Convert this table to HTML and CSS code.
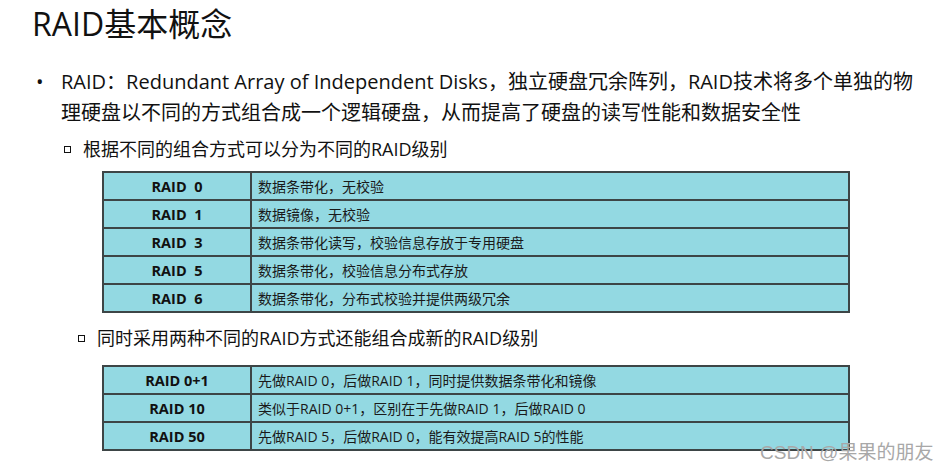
FILE: index.html
```html
<!DOCTYPE html>
<html lang="zh-CN">
<head>
<meta charset="utf-8">
<title>RAID基本概念</title>
<link rel="stylesheet" href="styles.css">
</head>
<body>
<div class="page">
  <h1 class="title">RAID基本概念</h1>
  <div class="bullet">
    <span class="dot">•</span>
    <p class="btext">RAID：Redundant Array of Independent Disks，独立硬盘冗余阵列，RAID技术将多个单独的物理硬盘以不同的方式组合成一个逻辑硬盘，从而提高了硬盘的读写性能和数据安全性</p>
  </div>
  <div class="sub sub1">
    <span class="sq"></span>
    <span class="stext">根据不同的组合方式可以分为不同的RAID级别</span>
  </div>
  <table class="tbl">
    <tr><td class="lv">RAID&nbsp;&nbsp;0</td><td class="ds">数据条带化，无校验</td></tr>
    <tr><td class="lv">RAID&nbsp;&nbsp;1</td><td class="ds">数据镜像，无校验</td></tr>
    <tr><td class="lv">RAID&nbsp;&nbsp;3</td><td class="ds">数据条带化读写，校验信息存放于专用硬盘</td></tr>
    <tr><td class="lv">RAID&nbsp;&nbsp;5</td><td class="ds">数据条带化，校验信息分布式存放</td></tr>
    <tr><td class="lv">RAID&nbsp;&nbsp;6</td><td class="ds">数据条带化，分布式校验并提供两级冗余</td></tr>
  </table>
  <div class="sub sub2">
    <span class="sq"></span>
    <span class="stext">同时采用两种不同的RAID方式还能组合成新的RAID级别</span>
  </div>
  <table class="tbl tbl2">
    <tr><td class="lv">RAID 0+1</td><td class="ds">先做RAID 0，后做RAID 1，同时提供数据条带化和镜像</td></tr>
    <tr><td class="lv">RAID 10</td><td class="ds">类似于RAID 0+1，区别在于先做RAID 1，后做RAID 0</td></tr>
    <tr><td class="lv">RAID 50</td><td class="ds">先做RAID 5，后做RAID 0，能有效提高RAID 5的性能</td></tr>
  </table>
  <div class="wm">CSDN @果果的朋友</div>
</div>
</body>
</html>
```
FILE: styles.css
```css
html, body {
  margin: 0;
  padding: 0;
  background: #ffffff;
}
body {
  font-family: "Open Sans", "Noto Sans CJK SC", sans-serif;
  color: #111111;
}
.page {
  position: relative;
  width: 946px;
  height: 472px;
  overflow: hidden;
}
.title {
  margin: 0;
  padding: 3px 0 0 32px;
  font-size: 32px;
  font-weight: 400;
  line-height: 42px;
}
.bullet {
  display: flex;
  margin-top: 21px;
  padding-left: 36px;
}
.dot {
  width: 25px;
  font-size: 20px;
  line-height: 31px;
}
.btext {
  margin: 0;
  width: 862px;
  font-size: 20px;
  line-height: 31px;
}
.sub {
  display: flex;
  align-items: center;
  font-size: 18px;
  line-height: 26px;
}
.sub1 {
  margin-top: 8px;
  padding-left: 64px;
}
.sub2 {
  margin-top: 12px;
  padding-left: 78px;
}
.sq {
  width: 5px;
  height: 5px;
  border: 1.5px solid #111;
  margin-right: 12px;
}
.tbl {
  border-collapse: collapse;
  margin: 9px 0 0 102px;
  width: 748px;
  background: #93d9e2;
  font-size: 14px;
}
.tbl2 {
  margin-top: 14px;
}
.tbl td {
  border: 2px solid #3d4546;
  height: 26px;
  padding: 0;
}
.lv {
  width: 146px;
  text-align: center;
  font-weight: 700;
  font-size: 14.5px;
}
.ds {
  padding-left: 6px !important;
  color: #1a1a1a;
}
.wm {
  position: absolute;
  left: 760px;
  top: 437px;
  font-family: "Liberation Sans", "Noto Sans CJK SC", sans-serif;
  font-size: 19px;
  color: #a8a8a8;
  white-space: nowrap;
}
```
